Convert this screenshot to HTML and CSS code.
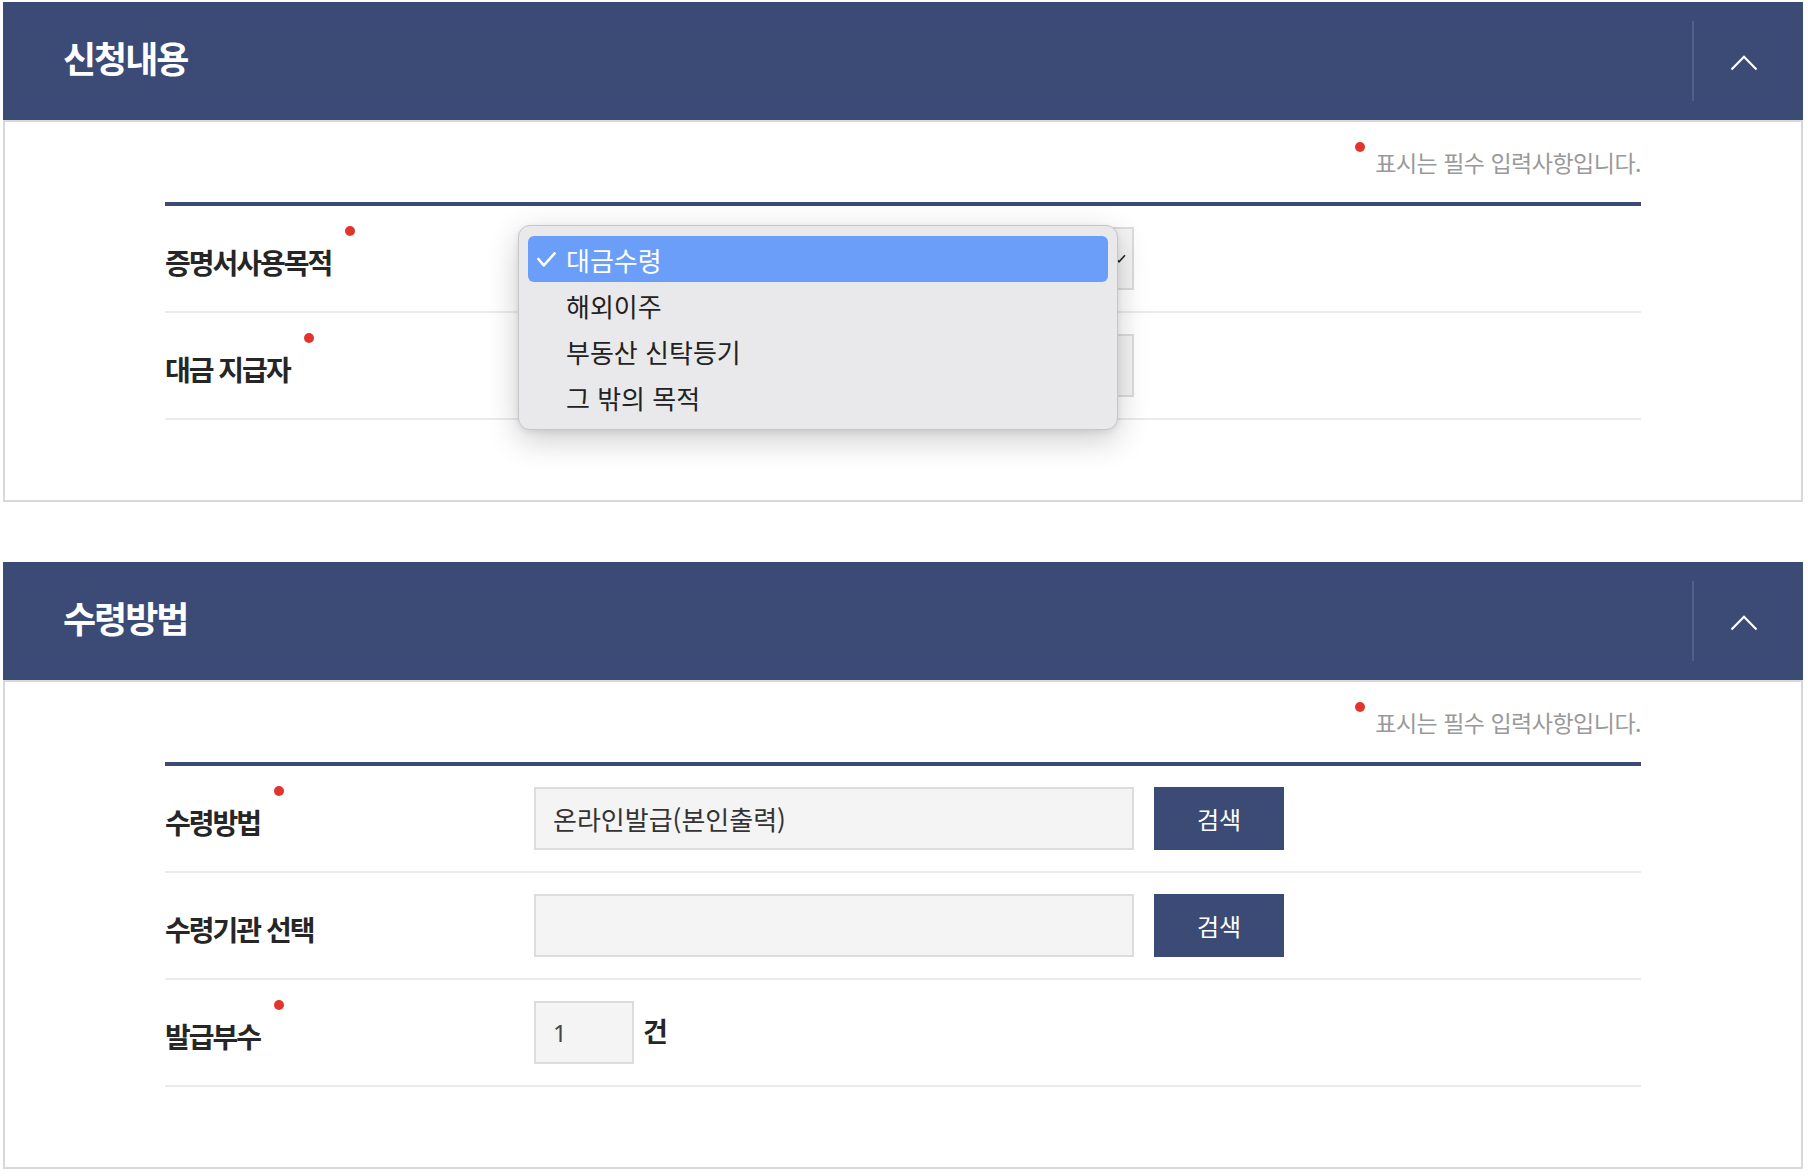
FILE: index.html
```html
<!DOCTYPE html>
<html lang="ko">
<head>
<meta charset="utf-8">
<title>신청내용</title>
<link rel="stylesheet" href="styles.css">
</head>
<body>
<div class="page">
  <section class="panel">
    <div class="panel-head">
      <h2 class="panel-title">신청내용</h2>
      <div class="panel-tools">
        <span class="divider"></span>
        <button class="toggle" type="button" aria-label="접기">
          <svg width="28" height="18" viewBox="0 0 28 18"><path d="M1.5 15.5 L14 2.8 L26.5 15.5" fill="none" stroke="#fff" stroke-width="2.2"/></svg>
        </button>
      </div>
    </div>
    <div class="panel-body">
      <p class="notice"><span class="notice-dot"></span>표시는 필수 입력사항입니다.</p>
      <div class="form-table">
        <div class="row">
          <div class="label"><span class="label-text">증명서사용목적</span><span class="req"></span></div>
          <div class="field">
            <div class="select-wrap">
              <div class="select">
                <svg class="caret" width="14" height="9" viewBox="0 0 14 9"><path d="M1 1.2 L7 7.8 L13 1.2" fill="none" stroke="#222" stroke-width="1.6"/></svg>
              </div>
              <ul class="dropdown">
                <li class="opt selected"><span class="check"><svg width="19" height="15" viewBox="0 0 19 15"><path d="M1.4 7 L6.8 13.4 L17.6 1.4" fill="none" stroke="#fff" stroke-width="2.6" stroke-linecap="round" stroke-linejoin="round"/></svg></span>대금수령</li>
                <li class="opt"><span class="check"></span>해외이주</li>
                <li class="opt"><span class="check"></span>부동산 신탁등기</li>
                <li class="opt"><span class="check"></span>그 밖의 목적</li>
              </ul>
            </div>
          </div>
        </div>
        <div class="row">
          <div class="label"><span class="label-text">대금 지급자</span><span class="req"></span></div>
          <div class="field">
            <input class="input" type="text" value="" readonly>
          </div>
        </div>
      </div>
    </div>
  </section>

  <section class="panel">
    <div class="panel-head">
      <h2 class="panel-title">수령방법</h2>
      <div class="panel-tools">
        <span class="divider"></span>
        <button class="toggle" type="button" aria-label="접기">
          <svg width="28" height="18" viewBox="0 0 28 18"><path d="M1.5 15.5 L14 2.8 L26.5 15.5" fill="none" stroke="#fff" stroke-width="2.2"/></svg>
        </button>
      </div>
    </div>
    <div class="panel-body">
      <p class="notice"><span class="notice-dot"></span>표시는 필수 입력사항입니다.</p>
      <div class="form-table">
        <div class="row">
          <div class="label"><span class="label-text">수령방법</span><span class="req"></span></div>
          <div class="field">
            <input class="input" type="text" value="온라인발급(본인출력)" readonly>
            <button class="btn" type="button">검색</button>
          </div>
        </div>
        <div class="row">
          <div class="label"><span class="label-text">수령기관 선택</span></div>
          <div class="field">
            <input class="input" type="text" value="" readonly>
            <button class="btn" type="button">검색</button>
          </div>
        </div>
        <div class="row">
          <div class="label"><span class="label-text">발급부수</span><span class="req"></span></div>
          <div class="field field-count">
            <input class="input input-count" type="text" value="1">
            <span class="unit">건</span>
          </div>
        </div>
      </div>
    </div>
  </section>
</div>
</body>
</html>
```

FILE: styles.css
```css
html, body {
  margin: 0;
  padding: 0;
  background: #fff;
}

body {
  font-family: "Noto Sans CJK KR", "Noto Sans", sans-serif;
  color: #222;
}

.page {
  padding: 2px 5px 20px 3px;
}

.panel + .panel {
  margin-top: 60px;
}

/* header */
.panel-head {
  height: 118px;
  background: #3b4b76;
  display: flex;
  align-items: center;
  padding-left: 60px;
}

.panel-title {
  margin: 0 0 9px;
  font-size: 36px;
  font-weight: 700;
  letter-spacing: -2px;
  color: #fff;
  line-height: 1;
}

.panel-tools {
  margin-left: auto;
  display: flex;
  align-items: center;
  height: 100%;
}

.divider {
  width: 2px;
  height: 80px;
  background: #506089;
}

.toggle {
  width: 100px;
  height: 100%;
  margin-right: 9px;
  padding: 3px 0 0;
  border: 0;
  background: transparent;
  display: flex;
  align-items: center;
  justify-content: center;
  cursor: pointer;
}

/* body */
.panel-body {
  border: 2px solid #d8d8d8;
  padding: 0 160px 80px;
}

.notice {
  margin: 0 0 25px;
  padding-top: 25px;
  line-height: 30px;
  text-align: right;
  font-size: 23px;
  letter-spacing: -0.5px;
  color: #999;
}

.notice-dot {
  display: inline-block;
  width: 10px;
  height: 10px;
  border-radius: 50%;
  background: #e2342c;
  vertical-align: top;
  margin-top: -5px;
  margin-right: 10px;
}

.form-table {
  border-top: 4px solid #3b4b76;
}

.row {
  display: grid;
  grid-template-columns: 369px 1fr;
  align-items: center;
  padding: 21px 0;
  border-bottom: 2px solid #ebebeb;
}

.label {
  display: flex;
  align-items: flex-start;
  padding-top: 7px;
}

.label-text {
  font-size: 28px;
  font-weight: 700;
  letter-spacing: -2px;
  line-height: 28px;
  color: #262626;
}

.req {
  flex: none;
  width: 10px;
  height: 10px;
  border-radius: 50%;
  background: #e2342c;
  margin-left: 14px;
  margin-top: -22px;
}

.field {
  display: flex;
  align-items: center;
  gap: 20px;
}

.field-count {
  gap: 9px;
}

.input {
  box-sizing: border-box;
  width: 600px;
  height: 63px;
  margin: 0;
  padding: 0 17px;
  border: 2px solid #dcdcdc;
  border-radius: 0;
  background: #f4f4f4;
  font-family: "Noto Sans CJK KR", "Noto Sans", sans-serif;
  font-size: 26px;
  color: #333;
  outline: none;
}

.input-count {
  width: 100px;
  font-family: "Noto Sans", "Noto Sans CJK KR", sans-serif;
  font-size: 24px;
  color: #444;
}

.unit {
  font-size: 27px;
  font-weight: 700;
  color: #262626;
  line-height: 1;
  margin-top: -5px;
}

.btn {
  width: 130px;
  height: 63px;
  border: 0;
  border-radius: 0;
  background: #3b4b76;
  color: #fff;
  font-family: "Noto Sans CJK KR", "Noto Sans", sans-serif;
  font-size: 24px;
  cursor: pointer;
}

/* select with open dropdown */
.select-wrap {
  position: relative;
  width: 600px;
  height: 63px;
}

.select {
  box-sizing: border-box;
  height: 63px;
  border: 2px solid #dcdcdc;
  background: #f4f4f4;
  display: flex;
  align-items: center;
  justify-content: flex-end;
  padding-right: 6px;
}

.dropdown {
  position: absolute;
  left: -16px;
  top: -2px;
  z-index: 10;
  box-sizing: border-box;
  width: 600px;
  margin: 0;
  padding: 10px 9px 9px;
  list-style: none;
  background: #e9e9eb;
  border: 1px solid #c6c6c8;
  border-radius: 12px;
  box-shadow: 0 10px 32px rgba(0, 0, 0, 0.2), 0 2px 6px rgba(0, 0, 0, 0.08);
}

.opt {
  height: 46px;
  display: flex;
  align-items: center;
  padding-left: 9px;
  border-radius: 6px;
  font-size: 26px;
  color: #222;
}

.opt.selected {
  background: #6a9ef8;
  color: #fff;
}

.check {
  flex: none;
  width: 29px;
  display: flex;
  align-items: center;
}
```
